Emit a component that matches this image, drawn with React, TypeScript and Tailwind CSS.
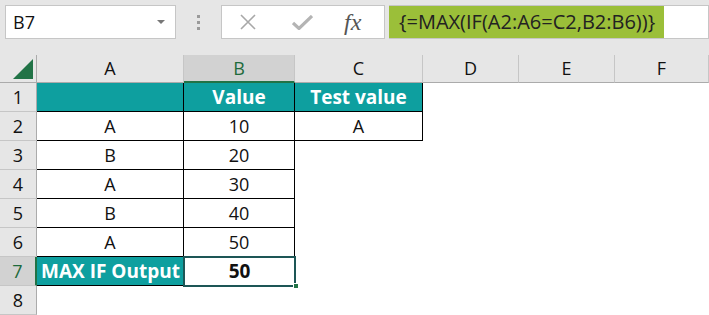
import React from 'react';

const cols = ['A', 'B', 'C', 'D', 'E', 'F'];

type Cell = { text?: string; cls?: string };

const rows: Cell[][] = [
  [
    { cls: 'bg-[#0e9f9f] border-r border-b border-black' },
    { text: 'Value', cls: 'bg-[#0e9f9f] border-r border-b border-black text-white font-bold text-[19px]' },
    { text: 'Test value', cls: 'bg-[#0e9f9f] border-r border-b border-black text-white font-bold text-[19px]' },
  ],
  [
    { text: 'A', cls: 'border-r border-b border-black' },
    { text: '10', cls: 'border-r border-b border-black' },
    { text: 'A', cls: 'border-r border-b border-black' },
  ],
  [
    { text: 'B', cls: 'border-r border-b border-black' },
    { text: '20', cls: 'border-r border-b border-black' },
    {},
  ],
  [
    { text: 'A', cls: 'border-r border-b border-black' },
    { text: '30', cls: 'border-r border-b border-black' },
    {},
  ],
  [
    { text: 'B', cls: 'border-r border-b border-black' },
    { text: '40', cls: 'border-r border-b border-black' },
    {},
  ],
  [
    { text: 'A', cls: 'border-r border-b border-black' },
    { text: '50', cls: 'border-r border-b border-black' },
    {},
  ],
  [
    { text: 'MAX IF Output', cls: 'bg-[#0e9f9f] border-b border-black text-white font-bold text-[19px]' },
    { text: '50', cls: 'font-bold text-[19px]' },
    {},
  ],
  [{}, {}, {}],
];

export default function App() {
  return (
    <div className="w-[709px] h-[315px] overflow-hidden bg-white font-['Open_Sans',sans-serif] text-[#111]">
      {/* formula bar */}
      <div className="h-[55px] bg-[#e6e6e6] flex items-start pt-[5px] pl-[5px]">
        <div className="w-[171px] h-[34px] bg-white border border-[#c6c6c6] flex items-center justify-between pl-[7px] pr-[10px]">
          <span className="text-[18px]">B7</span>
          <svg width="8" height="5" viewBox="0 0 8 5"><path d="M0 0h8L4 4z" fill="#777" /></svg>
        </div>
        <div className="w-[45px] h-[34px] flex flex-col items-center justify-center gap-[3px]">
          <span className="w-[3px] h-[3px] bg-[#9a9a9a]" />
          <span className="w-[3px] h-[3px] bg-[#9a9a9a]" />
          <span className="w-[3px] h-[3px] bg-[#9a9a9a]" />
        </div>
        <div className="w-[164px] h-[34px] bg-white border border-[#c6c6c6] flex items-center">
          <svg className="ml-[18px]" width="16" height="16" viewBox="0 0 16 16">
            <path d="M1 1L15 15M15 1L1 15" stroke="#a8a8a8" strokeWidth="1.6" />
          </svg>
          <svg className="ml-[36px]" width="21" height="15" viewBox="0 0 21 15">
            <path d="M1 8L7 13.5L20 1" stroke="#b4b4b4" strokeWidth="3.2" fill="none" />
          </svg>
          <span className="ml-[31px] text-[24px] italic text-[#555] font-['Liberation_Serif',serif] leading-none">fx</span>
        </div>
        <div className="ml-[4px] flex-1 h-[34px] bg-white border border-[#c6c6c6] border-l-0 flex">
          <div className="bg-[#9bbf39] h-full flex items-center pl-[10px] pr-[9px] text-[20px] text-[#222]">
            {'{=MAX(IF(A2:A6=C2,B2:B6))}'}
          </div>
        </div>
      </div>

      {/* sheet */}
      <div className="grid grid-cols-[37px_147px_111px_128px_96px_96px_1fr] grid-rows-[28px_repeat(8,29px)] text-[18px]">
        <div className="bg-[#e6e6e6] border-r border-b border-[#ababab] relative">
          <svg className="absolute right-[3px] bottom-[3px]" width="20" height="20" viewBox="0 0 20 20">
            <path d="M20 0V20H0z" fill="#217346" />
          </svg>
        </div>
        {cols.map((c) => (
          <div
            key={c}
            className={
              c === 'B'
                ? 'bg-[#d2d2d2] border-r border-[#c6c6c6] border-b-2 border-b-[#217346] flex items-center justify-center text-[#1e6b3c]'
                : 'bg-[#e6e6e6] border-r border-[#c6c6c6] border-b border-b-[#ababab] flex items-center justify-center'
            }
          >
            {c}
          </div>
        ))}
        {rows.map((r, i) => (
          <React.Fragment key={i}>
            <div
              className={
                i === 6
                  ? 'bg-[#d2d2d2] border-r-2 border-r-[#217346] border-b border-[#c6c6c6] flex items-center justify-center text-[#1e6b3c]'
                  : 'bg-[#e6e6e6] border-r border-r-[#ababab] border-b border-[#c6c6c6] flex items-center justify-center'
              }
            >
              {i + 1}
            </div>
            {r.map((cell, j) => (
              <div
                key={j}
                className={`relative flex items-center justify-center whitespace-nowrap ${cell.cls ?? ''}`}
              >
                {cell.text}
                {i === 6 && j === 1 && (
                  <>
                    <div className="absolute -left-[1px] -top-[1px] w-[113px] h-[31px] border-2 border-[#1d5656] pointer-events-none" />
                    <div className="absolute -right-[4px] -bottom-[3px] w-[6px] h-[6px] bg-[#217346] border border-white" />
                  </>
                )}
              </div>
            ))}
            <div />
            <div />
            <div />
          </React.Fragment>
        ))}
      </div>
    </div>
  );
}
